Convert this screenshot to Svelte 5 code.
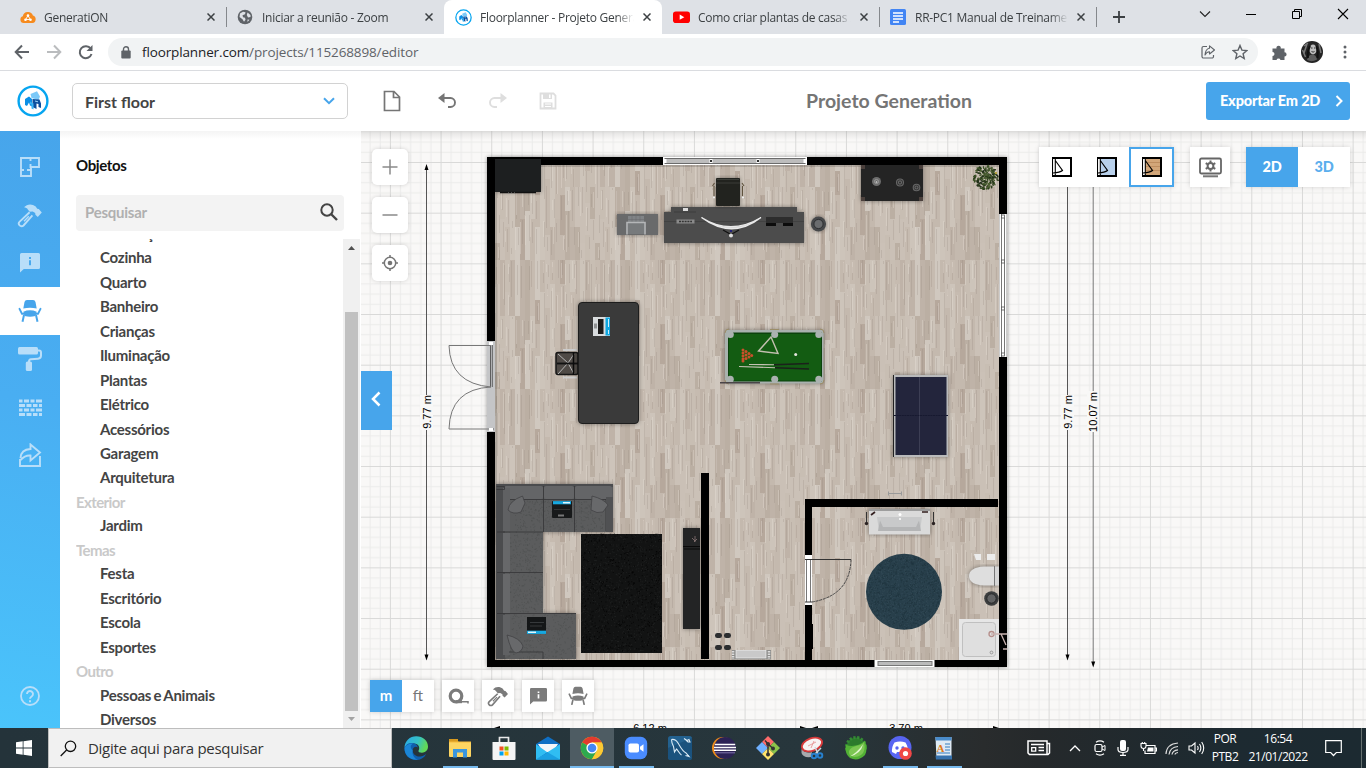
<script>
  function rng(seed) {
    let s = seed;
    return () => {
      s = (s * 16807) % 2147483647;
      return s / 2147483647;
    };
  }

  // Laminate floor tile: narrow vertical planks in staggered rows.
  const tones = ['#cdc4ba', '#c8beb3', '#c4b9ae', '#bfb3a8', '#cbc1b7', '#bbafa3', '#d0c8bf', '#c6bbb0', '#b6a89c', '#cac0b6'];
  const planks = tones.map((c) => ({ c, d: '' }));
  const grain = [];
  const shine = [];
  {
    const r = rng(4271);
    for (let k = 0; k < 20; k++) {
      const x = k * 5;
      const w = 5;
      let y = 0;
      while (y < 129) {
        let h = [24, 32, 32, 40, 56][Math.floor(r() * 5)];
        if (y + h > 112) h = 129 - y;
        const i = Math.floor(r() * tones.length);
        planks[i].d += `M${x} ${y}h${w}v${h}h-${w}z`;
        grain.push(`M${x + 1 + Math.floor(r() * 4)}.5 ${y + Math.floor(r() * 8)}v${Math.floor(h * (0.4 + r() * 0.4))}`);
        if (r() > 0.4) shine.push(`M${x + Math.floor(r() * 4)}.5 ${y + Math.floor(r() * 6)}v${Math.floor(h * (0.3 + r() * 0.5))}`);
        y += h;
      }
    }
  }

  function specks(n, seed, x, y, w, h, round) {
    const r = rng(seed);
    let d = '';
    for (let i = 0; i < n; i++) {
      const px = r() * w;
      const py = r() * h;
      if (round && Math.hypot(px - w / 2, py - h / 2) > w / 2 - 1) continue;
      d += `M${(x + px).toFixed(1)} ${(y + py).toFixed(1)}h.9`;
    }
    return d;
  }
  const rugSpecks = specks(900, 77, 581, 534, 80, 118, false);
  const rugDark = specks(700, 99, 581, 534, 80, 118, false);
  const roundLight = specks(1300, 31, 866, 554, 76, 76, true);
  const roundDark = specks(1300, 53, 866, 554, 76, 76, true);
  const sofaSpecks = specks(500, 13, 497, 532, 45, 80, false) + specks(400, 17, 497, 614, 78, 45, false) + specks(400, 19, 515, 500, 88, 31, false);
  const leaves = (() => {
    const r = rng(881);
    const out = [];
    for (let i = 0; i < 150; i++) {
      const a = r() * 6.28;
      const q = Math.pow(r(), 0.6) * 12.5;
      out.push({ x: 985.5 + Math.cos(a) * q, y: 177.5 + Math.sin(a) * q * 0.95, a: a * 97, c: ['#2c3d1c', '#3c5227', '#22301a', '#4b5f31'][i % 4] });
    }
    return out;
  })();

  const tabs = [
    { icon: 'cloud', title: 'GeneratiON', w: 226, sep: true },
    { icon: 'globe', title: 'Iniciar a reunião - Zoom', w: 218 },
    { icon: 'fp', title: 'Floorplanner - Projeto Generation', w: 218, active: true },
    { icon: 'yt', title: 'Como criar plantas de casas 2D', w: 217, sep: true },
    { icon: 'doc', title: 'RR-PC1 Manual de Treinamento', w: 217, sep: true }
  ];
  const list = [
    { t: 'Decoração' }, { t: 'Cozinha' }, { t: 'Quarto' }, { t: 'Banheiro' }, { t: 'Crianças' }, { t: 'Iluminação' },
    { t: 'Plantas' }, { t: 'Elétrico' }, { t: 'Acessórios' }, { t: 'Garagem' }, { t: 'Arquitetura' },
    { t: 'Exterior', h: true }, { t: 'Jardim' }, { t: 'Temas', h: true }, { t: 'Festa' }, { t: 'Escritório' },
    { t: 'Escola' }, { t: 'Esportes' }, { t: 'Outro', h: true }, { t: 'Pessoas e Animais' }, { t: 'Diversos' }
  ];
  const apps = ['edge', 'files', 'store', 'mail', 'chrome', 'zoom', 'mysql', 'eclipse', 'git', 'snip', 'spring', 'discord', 'wordpad'];
  const running = ['files', 'zoom', 'discord', 'wordpad'];
</script>

{#snippet logo(size)}
  <svg width={size} height={size} viewBox="0 0 32 32">
    <circle cx="16" cy="16" r="14.4" fill="#fff" stroke="#06a5f0" stroke-width="2.4" />
    <path d="M13.500 9l6.500-2.800 3 5.300-1.500 3.500-7-2z" fill="#7cc9f8" />
    <path d="M8 14l4-2.500 3 2.500v7.500l-2-1-1-3-2 3.500-2-1z" fill="#0a8fe6" />
    <path d="M15.500 14l7 .5 1.500 4v4.500l-2.500-1v-3l-2-.5V24l-4-2z" fill="#0b4f9e" />
    <path d="M13 16.500l3.500 2V24.500l-2-1v-4L13 19z" fill="#37b4f5" />
    <path d="M18 16l3 .8" stroke="#9bd8fb" stroke-width="1" />
  </svg>
{/snippet}

{#snippet hammer()}
  <svg width="26" height="26" viewBox="0 0 26 26">
    <path d="M7 5.300C10 1.800 15 1.400 18.700 4.500l1.500 2.200 1.600.4 3 3.400-4 4.400-2.400-2.200-.2-1.800-2.500-1.500-3 .4L11 7.700C10 6 8.600 5.600 7 5.300z" fill="currentColor" />
    <path d="M12.600 10.300L2.700 19.600a2.700 2.700 0 0 0 3.800 3.900l8.900-10.100" fill="none" stroke="currentColor" stroke-width="1.900" />
    <path d="M7 19.200l4.800-5" stroke="currentColor" stroke-width="1.300" />
  </svg>
{/snippet}

{#snippet note()}
  <svg width="20" height="20" viewBox="0 0 20 20">
    <path fill-rule="evenodd" fill="currentColor" d="M1.500 0h17A1.500 1.500 0 0 1 20 1.500v13a1.500 1.500 0 0 1-1.500 1.500H3.800L0 19.500v-18A1.500 1.500 0 0 1 1.500 0zM9 4v2h2V4zM9 7.300v5h2v-5z" />
  </svg>
{/snippet}

{#snippet chair()}
  <svg width="24" height="24" viewBox="0 0 24 24">
    <path d="M9 1h6q2 0 2.500 2l1.200 6.500q-6.700-1.700-13.400 0L6.500 3Q7 1 9 1z" fill="currentColor" />
    <path d="M1.500 9.800l2.500 5h3M22.500 9.800l-2.500 5h-3" fill="none" stroke="currentColor" stroke-width="1.900" stroke-linecap="round" />
    <path d="M5.300 12.700q6.700-2.800 13.400 0l-1.300 4.300q-5.400 1.400-10.800 0z" fill="currentColor" />
    <path d="M6 16l-1.500 6.700M18 16l1.500 6.700" stroke="currentColor" stroke-width="2" />
  </svg>
{/snippet}

{#snippet xmark(s)}
  <svg width={s} height={s} viewBox="0 0 8 8"><path d="M.5.5l7 7M7.500.5l-7 7" stroke="#3c4043" stroke-width="1.500" /></svg>
{/snippet}

{#snippet plan(fill)}
  <svg width="20" height="20" viewBox="0 0 20 20">
    <rect x="1" y="1" width="18" height="18" {fill} stroke="#000" stroke-width="2" />
    {#if fill === '#d2a679'}<path d="M3 5.500h15M3 9.500h15M3 13.500h15" stroke="#bd8d60" />{/if}
    <path d="M1 2h2v16H1z" fill="#fff" />
    <path d="M.5 1v18M3.300 2v16M3.300 3.500L10.500 13.500Q8 15.500 1 16" fill="none" stroke="#000" stroke-width="1.100" />
  </svg>
{/snippet}

{#snippet tabIcon(name)}
  {#if name === 'cloud'}
    <svg width="16" height="16" viewBox="0 0 16 16"><path d="M3.500 14A3.500 3.500 0 0 1 2.800 7.200 5.200 5.200 0 0 1 12.900 6.600 3.800 3.800 0 0 1 12.500 14z" fill="#f68b1f" /><path d="M8 6.500l-2.300 4h4.600z" fill="none" stroke="#fff" stroke-width=".9" /><g fill="#fff"><circle cx="8" cy="6.500" r="1.300" /><circle cx="5.500" cy="10.700" r="1.300" /><circle cx="10.500" cy="10.700" r="1.300" /></g></svg>
  {:else if name === 'globe'}
    <svg width="16" height="16" viewBox="0 0 16 16"><circle cx="8" cy="8" r="7.300" fill="#5f6368" /><path d="M3 4.500l3-1.800 2.500.5-.5 2-2.500 1 .5 2 2 .5.500 2-1.500 2-1.500-2.500L2.500 8zM10.500 3.500l3 2.500v2l-2.500.5-1.200-2.500zM10.500 10.500l2 .2-2 2.300z" fill="#dee1e6" /></svg>
  {:else if name === 'fp'}
    {@render logo(17)}
  {:else if name === 'yt'}
    <svg width="17" height="16" viewBox="0 0 17 16"><rect y="2.500" width="17" height="11.500" rx="2.800" fill="#f00" /><path d="M6.700 5.600v5.200L11.300 8.200z" fill="#fff" /></svg>
  {:else}
    <svg width="16" height="16" viewBox="0 0 16 16"><rect width="16" height="16" rx="1.500" fill="#4285f4" /><path d="M3 4h10M3 7h10M3 10h10M3 13h6" stroke="#fff" stroke-width="1.500" /></svg>
  {/if}
{/snippet}

{#snippet appIcon(n)}
  <svg width="24" height="24" viewBox="0 0 24 24">
    {#if n === 'edge'}
      <defs><linearGradient id="eg" x1="0" y1="0" x2="1" y2=".3"><stop offset="0" stop-color="#2aa9e8" /><stop offset=".6" stop-color="#35c1c6" /><stop offset="1" stop-color="#62d957" /></linearGradient></defs>
      <path d="M.5 12C.500 5 6 .3 12.200.3 19 .3 24 5 24 10.600c0 4-3 6.200-6 6.200-2.500 0-4-1-3.500-2 1.800-3 .3-7.300-4.500-7.300C5 7.500 1.500 10 .500 12z" fill="url(#eg)" />
      <path d="M.5 12c1-3.500 4.500-5.500 8-5 3 .3 5.200 2.200 5.200 4.500-2-1.500-5-.3-5 3 0 4 4 6.500 8 6 3-.4 4.500-2 5.500-2.500C20 22 16.500 24 12 24 5.500 24 0 19 .5 12z" fill="#0f5fae" />
      <path d="M8.700 14.500c-1 3.500 1.300 8 5.300 9.300C6 24.500.5 19 .5 12 2 8.500 6 7 9 7.500c-2.800 1.500-3 4.500-.3 7z" fill="#1b86d6" />
    {:else if n === 'files'}
      <path d="M1 3.500h8l1.500 2H23V20H1z" fill="#f6b93b" /><path d="M1 6.500h22V20a1 1 0 0 1-1 1H2a1 1 0 0 1-1-1z" fill="#fdd562" /><path d="M1 3h9v2.500H1z" fill="#d99a1f" /><path d="M5 21.500V13h14v8.500h-4v-5H9v5z" fill="#3b96dc" />
    {:else if n === 'store'}
      <path d="M7.500 6V1.500h9V6" fill="none" stroke="#e9e9e9" stroke-width="1.700" /><path d="M.5 6h23v17a1 1 0 0 1-1 1h-21a1 1 0 0 1-1-1z" fill="#f4f4f4" /><path d="M7.500 10.500h4v4h-4z" fill="#f25022" /><path d="M12.500 10.500h4v4h-4z" fill="#7fba00" /><path d="M7.500 15.500h4v4h-4z" fill="#00a4ef" /><path d="M12.500 15.500h4v4h-4z" fill="#ffb900" />
    {:else if n === 'mail'}
      <path d="M0 8L12 .500 24 8v15.500H0z" fill="#0f6fc4" /><path d="M2 8h20l-5 8H7z" fill="#f3f6f9" /><path d="M0 8.200l12 8.500-12 6.800zM24 8.200L0 23.500h24z" fill="#30bdf2" /><path d="M0 23.500l12-7 12 7z" fill="#1ba0e2" />
    {:else if n === 'chrome'}
      <circle cx="12" cy="12" r="11.200" fill="#fbc116" /><path d="M12 12L2.300 6.400A11.200 11.200 0 0 1 21.700 6.400H12z" fill="#e33b2e" /><path d="M12 12l-9.700-5.600A11.200 11.200 0 0 0 12 23.200l5-8.500z" fill="#2da94f" /><path d="M12 6.400h9.700A11.200 11.200 0 0 1 12 23.200l4.800-8.400z" fill="#fcc934" /><circle cx="12" cy="12" r="5.600" fill="#fff" /><circle cx="12" cy="12" r="4.300" fill="#4587f3" />
    {:else if n === 'zoom'}
      <rect x=".8" y=".8" width="22.400" height="22.400" rx="6.500" fill="#4a8cff" /><rect x="4.500" y="7.500" width="10.500" height="9" rx="1.800" fill="#fff" /><path d="M16 10.800l3.500-2.600v7.600L16 13.200z" fill="#fff" />
    {:else if n === 'mysql'}
      <rect width="24" height="24" rx="2.500" fill="#23618f" /><path d="M0 12L24 2v19a3 3 0 0 1-3 3H3a3 3 0 0 1-3-3z" fill="#174c76" opacity=".7" /><path d="M3.500 3.500c3-.5 5 1 6.500 3.500 2.500 4 4 8 8 10l3 3.500-3.500-1M3.500 3.500c0 3 1 5 2 7l1 5.500 2-3c2 2 3 5 5 6M16 2.500l3 2 2-1 1 2.500-2 0-2-2" fill="none" stroke="#dcecf7" stroke-width="1.100" />
    {:else if n === 'eclipse'}
      <ellipse cx="11" cy="12" rx="11" ry="11" fill="#f08c1a" /><circle cx="13" cy="12" r="11" fill="#2c2255" /><path d="M2.800 8.500h20.400M2 11.500h22M2 14.300h22" stroke="#fff" stroke-width="1.400" /><path d="M3 16.800h20" stroke="#8075ad" stroke-width="1" />
    {:else if n === 'git'}
      <path d="M12 0l6 6-6 6-6-6z" fill="#ff6b6b" /><path d="M6 6l6 6-6 6-6-6z" fill="#6fb0ff" /><path d="M18 6l6 6-6 6-6-6z" fill="#8bc34a" /><path d="M12 12l6 6-6 6-6-6z" fill="#ffe36b" /><path d="M9 4.500l3 3.500v11M12 8l5 4.500" fill="none" stroke="#333" stroke-width="1.500" /><circle cx="12" cy="8" r="2" fill="#333" /><circle cx="17" cy="12.500" r="2" fill="#333" /><circle cx="12" cy="18.500" r="2" fill="#333" />
    {:else if n === 'snip'}
      <path d="M1.500 13q4 5 10.500 3l-1 5Q3 22 1.500 17z" fill="#a6aaad" /><ellipse cx="12" cy="8.500" rx="10.500" ry="6.300" transform="rotate(-20 12 8.500)" fill="#f7f4f4" stroke="#d83a3a" stroke-width="1.800" /><path d="M8 10l8-4M11 12l3-7" stroke="#e9a0a0" stroke-width="1" /><path d="M15 11l3 7M21 12l-6 6" stroke="#cfd8df" stroke-width="1.500" /><circle cx="14" cy="20" r="2.300" fill="none" stroke="#2781cf" stroke-width="1.900" /><circle cx="20" cy="19.500" r="2.300" fill="none" stroke="#2781cf" stroke-width="1.900" />
    {:else if n === 'spring'}
      <circle cx="12" cy="11" r="9.500" fill="#2c7a2c" stroke="#348b34" stroke-width="3" stroke-dasharray="2.200 1.600" /><path d="M2 9q10 3 19-4 3 8 0 14-7 7-15 3Q0 17 2 9z" fill="#52b135" /><path d="M20 6q2 10-3 13-6 3.500-11 .5-3-5 2-8 4-2 8-2.500 3-.8 4-3z" fill="#7cc653" /><path d="M19 8.500q-2 9-13 12 7-4 13-12z" fill="#e2f6cf" />
    {:else if n === 'discord'}
      <circle cx="12" cy="11.500" r="11.500" fill="#5865f2" /><path d="M6.500 6.500q5.500-2 11 0 3 5 2.500 9.500l-4 2-1-2h-6l-1 2-4-2Q3.500 11 6.500 6.500z" fill="#fff" /><circle cx="9" cy="12" r="1.700" fill="#5865f2" /><circle cx="15" cy="12" r="1.700" fill="#5865f2" /><circle cx="17.500" cy="17.500" r="6.300" fill="#f04747" /><circle cx="17.500" cy="17.500" r="2.600" fill="#fff" />
    {:else}
      <path d="M3.500 1h16v22H4.500z" fill="#dfeaf4" /><path d="M3.500 1h16v3.500h-16z" fill="#4a8ccb" /><path d="M13 8h5M13 11h5M13 14h5M5 17h13" stroke="#6da1cf" stroke-width="1.300" /><path d="M3.500 19.500h16.500v4h-16z" fill="#3772ad" /><text x="4.500" y="15.500" font-size="11" font-weight="bold" font-family="Liberation Serif, serif" fill="#e07a1b">A</text>
    {/if}
  </svg>
{/snippet}

<div class="screen">
  <div class="tabs">
    {#each tabs as t}
      <div class="tab" class:active={t.active} class:sep={t.sep} style="width:{t.w}px">
        <span class="fav">{@render tabIcon(t.icon)}</span>
        <span class="title">{t.title}</span>
        <span class="x">{@render xmark(8)}</span>
      </div>
    {/each}
    <svg class="newtab" width="12" height="12" viewBox="0 0 12 12"><path d="M6 0v12M0 6h12" stroke="#3c4043" stroke-width="1.800" /></svg>
    <div class="wins">
      <svg width="12" height="12" viewBox="0 0 12 12"><path d="M1 3.500l5 5 5-5" fill="none" stroke="#222" stroke-width="1.100" /></svg>
      <svg width="12" height="12" viewBox="0 0 12 12"><path d="M1 6.500h10" stroke="#000" stroke-width="1" /></svg>
      <svg width="12" height="12" viewBox="0 0 12 12"><path d="M1.500 3.500h7v7h-7zM3.500 3.500v-2h7v7h-2" fill="none" stroke="#000" stroke-width="1" /></svg>
      <svg width="12" height="12" viewBox="0 0 12 12"><path d="M1 1l10 10M11 1L1 11" stroke="#000" stroke-width="1.100" /></svg>
    </div>
  </div>

  <div class="toolbar">
    <svg class="nav" width="16" height="16" viewBox="0 0 16 16"><path d="M15 8H2M8 1.500L1.700 8 8 14.500" fill="none" stroke="#5f6368" stroke-width="2" /></svg>
    <svg class="nav" width="16" height="16" viewBox="0 0 16 16"><path d="M1 8h13M8 1.500L14.300 8 8 14.500" fill="none" stroke="#babcbe" stroke-width="2" /></svg>
    <svg class="nav" width="16" height="16" viewBox="0 0 16 16"><path d="M13.500 10a6 6 0 1 1-.8-5.300" fill="none" stroke="#5f6368" stroke-width="2" /><path d="M14.500 1v6H8.500z" fill="#5f6368" /></svg>
    <div class="omni">
      <svg width="10" height="13" viewBox="0 0 10 13"><rect x=".3" y="4.500" width="9.400" height="8" rx="1" fill="#5f6368" /><path d="M2.500 5V3.200a2.500 2.500 0 0 1 5 0V5" fill="none" stroke="#5f6368" stroke-width="1.400" /></svg>
      <span class="url"><b>floorplanner.com</b>/projects/115268898/editor</span>
      <svg class="share" width="16" height="16" viewBox="0 0 16 16"><path d="M7 2.500H3.500a1.500 1.500 0 0 0-1.500 1.500v8.500A1.500 1.500 0 0 0 3.500 14H12a1.500 1.500 0 0 0 1.500-1.500V11" fill="none" stroke="#5f6368" stroke-width="1.200" /><path d="M9.500 1.800L14.500 6l-5 4V7.800Q6.500 7.800 5 11q.5-6 4.500-6.700z" fill="none" stroke="#5f6368" stroke-width="1.100" stroke-linejoin="round" /></svg>
      <svg width="16" height="16" viewBox="0 0 16 16"><path d="M8 1.500l1.900 4.600 4.900.4-3.700 3.200 1.100 4.800L8 12l-4.200 2.500 1.100-4.800L1.200 6.500l4.900-.4z" fill="none" stroke="#5f6368" stroke-width="1.400" /></svg>
    </div>
    <svg class="puz" width="17" height="17" viewBox="0 0 17 17"><path d="M1.500 4.500h4a2.200 2.200 0 1 1 4.200 0h3.800V8.300a2.100 2.100 0 1 1 0 4.200V16h-4a2.100 2.100 0 0 0-4 0h-4v-4a2 2 0 0 0 0-4z" fill="#5f6368" /></svg>
    <svg class="ava" width="22" height="22" viewBox="0 0 22 22"><circle cx="11" cy="11" r="11" fill="#242424" /><path d="M3 5l4-3M1.500 9l3 7M18 3l2 9M3 12l3-9" stroke="#777" stroke-width="1.500" /><ellipse cx="12" cy="8.500" rx="3.600" ry="5" fill="#bdbdbd" /><path d="M10 7h1.500M13 7h1.500M10.500 10.500q1.700 1.300 3 0" stroke="#333" fill="none" /><path d="M6 19q1-5 5-5.500 4 0 5 5-5 3-10 .5z" fill="#5d5d5d" /><path d="M9 5q-3 6-2 12M15.500 5q2 6 1 12" fill="none" stroke="#111" stroke-width="2" /></svg>
    <svg width="4" height="16" viewBox="0 0 4 16" fill="#5f6368"><circle cx="2" cy="3" r="1.500" /><circle cx="2" cy="8" r="1.500" /><circle cx="2" cy="13" r="1.500" /></svg>
  </div>

  <header>
    <span class="brand">{@render logo(32)}</span>
    <div class="select">First floor
      <svg width="12" height="8" viewBox="0 0 12 8"><path d="M1 1.200l5 5 5-5" fill="none" stroke="#47a5eb" stroke-width="2" /></svg>
    </div>
    <div class="tools">
      <svg width="20" height="22" viewBox="0 0 20 22"><path d="M2.500 1.500h9.500l5.500 5.500v13.500h-15zM11.500 1.500v6h6" fill="none" stroke="#757575" stroke-width="1.700" /></svg>
      <svg class="undo" width="20" height="22" viewBox="0 0 20 22"><path d="M5 8h8.500a4.500 4.500 0 0 1 0 9H11" fill="none" stroke="#757575" stroke-width="1.900" /><path d="M7.500 3v10L1 8z" fill="#757575" /></svg>
      <svg class="redo" width="20" height="22" viewBox="0 0 20 22"><path d="M15 8H6.500a4.500 4.500 0 0 0 0 9H9" fill="none" stroke="#dedede" stroke-width="1.900" /><path d="M12.500 3v10L19 8z" fill="#dedede" /></svg>
      <svg width="20" height="22" viewBox="0 0 20 22"><path d="M2.500 3.500h13l2 2v13h-15z" fill="none" stroke="#dedede" stroke-width="1.800" /><path d="M5 3h9v6H5zM5.500 12.500h9V18h-9z" fill="#dedede" /><path d="M11 4.500h1.500V8H11z" fill="#fff" /><path d="M7 14h6M7 16.500h6" stroke="#fff" /></svg>
    </div>
    <h1>Projeto Generation</h1>
    <button class="export">Exportar Em 2D
      <svg width="8" height="12" viewBox="0 0 8 12"><path d="M1.500 1l5 5-5 5" fill="none" stroke="#fff" stroke-width="2" /></svg>
    </button>
  </header>

  <main>
    <nav>
      <div><svg width="20" height="20" viewBox="0 0 20 20"><path d="M1 1h18v9h-8v9H1zM10.500 1v3M10.500 7v4M1 13h3M7 13h4" fill="none" stroke="currentColor" stroke-width="1.900" /></svg></div>
      <div>{@render hammer()}</div>
      <div>{@render note()}</div>
      <div class="on">{@render chair()}</div>
      <div><svg width="24" height="24" viewBox="0 0 24 24"><rect y="0" width="20" height="7.500" rx="1.500" fill="currentColor" /><path d="M20 3.500h1q2 0 2 2v3q0 3-3 3.200l-7 .6q-2 .2-2 2.200v1" fill="none" stroke="currentColor" stroke-width="2" /><rect x="7.800" y="14.500" width="6.200" height="9.500" rx="1.500" fill="currentColor" /></svg></div>
      <div><svg width="23" height="17" viewBox="0 0 23 17"><path d="M0 2h3.500M5 2h5M11.500 2h4M17 2h6M0 6.500h6M7.500 6.500h5M14 6.500h4.500M20 6.500h3M0 11h3.500M5 11h5M11.500 11h4M17 11h6M0 15.500h6M7.500 15.500h5M14 15.500h4.500M20 15.500h3" stroke="currentColor" stroke-width="3" /></svg></div>
      <div><svg width="24" height="24" viewBox="0 0 24 24"><path d="M2.500 15Q3 6.500 12.500 6V1.500l9.500 8-9.500 8v-5Q7 12 2.500 17M2 16v7h20V13" fill="none" stroke="currentColor" stroke-width="1.900" /></svg></div>
      <div class="help"><svg width="20" height="20" viewBox="0 0 20 20"><circle cx="10" cy="10" r="9" fill="none" stroke="currentColor" stroke-width="1.800" /><path d="M7 8a3 3 0 1 1 4.600 2.500Q10 11.500 10 12.800" fill="none" stroke="currentColor" stroke-width="1.900" /><path d="M9 14.300h2v2H9z" fill="currentColor" /></svg></div>
    </nav>

    <aside>
      <h2>Objetos</h2>
      <div class="search">Pesquisar
        <svg width="18" height="18" viewBox="0 0 18 18"><circle cx="7" cy="7" r="5.700" fill="none" stroke="#444" stroke-width="2" /><path d="M11 11l6 6" stroke="#444" stroke-width="2.400" /></svg>
      </div>
      <div class="scroller">
        <div class="list">
          {#each list as i}
            <div class={i.h ? 'group' : 'item'}>{i.t}</div>
          {/each}
        </div>
        <div class="bar">
          <svg width="7" height="4" viewBox="0 0 7 4"><path d="M0 4L3.500 0 7 4z" fill="#505050" /></svg>
          <span class="thumb"></span>
          <svg width="7" height="4" viewBox="0 0 7 4"><path d="M0 0l3.500 4L7 0z" fill="#a3a3a3" /></svg>
        </div>
      </div>
    </aside>

    <section>
      <svg class="canvas" width="1005" height="597" viewBox="361 131 1005 597">
        <defs>
          <pattern id="grid" patternUnits="userSpaceOnUse" x="389.900" y="162" width="50.670" height="50.670">
            <path d="M10.600 0v50.700M20.700 0v50.700M30.900 0v50.700M41 0v50.700M0 10.600h50.700M0 20.700h50.700M0 30.900h50.700M0 41h50.700" stroke="#ebebea" stroke-width="1" />
            <path d="M.5 0v50.700M0 .5h50.700" stroke="#d9d9d8" stroke-width="1" />
          </pattern>
          <pattern id="floor" patternUnits="userSpaceOnUse" x="495" y="131" width="100" height="129">
            {#each planks as p}<path d={p.d} fill={p.c} />{/each}
            <path d={grain.join('')} stroke="#8f8074" stroke-opacity=".22" stroke-width="1" />
            <path d={shine.join('')} stroke="#e6ded6" stroke-opacity=".35" stroke-width="1" />
          </pattern>
          <linearGradient id="topshade" x1="0" y1="0" x2="0" y2="1"><stop offset="0" stop-color="#000" stop-opacity=".09" /><stop offset="1" stop-color="#000" stop-opacity="0" /></linearGradient>
          <filter id="sh" x="-10%" y="-10%" width="120%" height="120%" color-interpolation-filters="sRGB"><feDropShadow dx="0" dy="0" stdDeviation="2" flood-opacity=".4" /></filter>
        </defs>
        <rect x="361" y="131" width="1005" height="597" fill="#f9f8f7" />
        <rect x="361" y="131" width="1005" height="597" fill="url(#grid)" />

        <rect x="487" y="157" width="520" height="510" fill="#000" filter="url(#sh)" />
        <rect x="495" y="165" width="504" height="495" fill="url(#floor)" />
        <path d="M496 660V166H999" fill="none" stroke="#000" stroke-opacity=".15" stroke-width="2" />

        <g fill="#000"><rect x="701" y="473" width="8" height="186" /><rect x="805" y="499" width="193" height="8" /><rect x="805" y="499" width="7" height="162" /><rect x="811" y="624" width="2" height="25" /></g>

        <!-- windows -->
        <rect x="663" y="157" width="144" height="8" fill="#fff" /><rect x="665" y="158.500" width="140" height="5" fill="#bdbdbd" stroke="#6b6b6b" /><path d="M711 159v4M758 159v4M665 159v4M805 159v4" stroke="#fff" stroke-width="3" /><path d="M710 160h2v2h-2zM757 160h2v2h-2z" fill="#333" />
        <rect x="999" y="214" width="8" height="143" fill="#fff" /><path d="M1001.500 214v143M1004.500 218v135" stroke="#777" /><path d="M999.500 214v143M1006.500 214v143" stroke="#ccc" /><g fill="#fff" stroke="#555" stroke-width=".8"><rect x="1001.500" y="215" width="3" height="3" /><rect x="1001.500" y="260" width="3" height="3" /><rect x="1001.500" y="307" width="3" height="3" /><rect x="1001.500" y="353" width="3" height="3" /></g>
        <rect x="874.500" y="660" width="60" height="7" fill="#fff" /><rect x="878" y="661.500" width="54" height="4" fill="#bbb" stroke="#777" />

        <!-- doors -->
        <rect x="487" y="341" width="8" height="91" fill="#c4c5c7" /><path d="M490.500 345v42M492.300 345v42M489 429h5" fill="none" stroke="#444" stroke-width=".8" /><path d="M491 345.500h-42q1 38 42 41.500q-41 2-42 42h42" fill="none" stroke="#777" stroke-width="1" /><path d="M489 342h4v3h-4zM489 428h4v3h-4z" fill="#fff" />
        <rect x="805" y="555" width="7" height="50" fill="#fff" /><path d="M806.500 559v43M810.500 559v43" stroke="#777" /><path d="M805 559.500h46M805 602h7" stroke="#333" /><path d="M851 559.500q-1 36-39 42.500" fill="none" stroke="#444" stroke-dasharray="3 .8" />

        <!-- cabinet -->
        <rect x="495" y="159" width="46" height="33" fill="#1d1f20" filter="url(#sh)" /><path d="M500 192.500h36" stroke="#111" stroke-width="1.500" /><path d="M508 193h7" stroke="#888" stroke-dasharray="1 2" />

        <!-- printer -->
        <g filter="url(#sh)"><rect x="617" y="214" width="41" height="21" fill="#696a6b" /></g>
        <rect x="628" y="216" width="16" height="7" fill="#808386" /><path d="M628 219.500h16M632 216v6M636 216v6M640 216v6" stroke="#6b6d70" stroke-width=".6" /><rect x="628" y="223" width="16" height="11" fill="#777a7c" /><path d="M627 234.500V222.500h18v12" fill="none" stroke="#b4b6b8" stroke-width="1.600" />

        <!-- desk -->
        <path d="M671 207h126v5h7v31H664v-31h7z" fill="#4c4c4c" filter="url(#sh)" /><path d="M664 221.500h140" stroke="#414141" /><path d="M674 212h22" stroke="#3c3c3c" />
        <rect x="716" y="178" width="24" height="28" rx="1" fill="#22231f" filter="url(#sh)" /><path d="M716 183h24M717 179.500h22" stroke="#3b3d38" /><path d="M714.500 183l-2 3M714 186v10M742 183l2 3M742.500 186v10" stroke="#5f523e" stroke-width="1.100" fill="none" /><path d="M713 197.500h2M742 197.500h2" stroke="#eee" stroke-width="1.500" />
        <path d="M701.500 217.500q29 18.500 59.500 0q-29 22.500-59.500 0z" fill="#cfcfcf" stroke="#e9e9e9" stroke-width="1.300" /><path d="M723 230l8 4.500 8-4.500" fill="none" stroke="#111" stroke-width="1.200" /><circle cx="731" cy="235.500" r="2" fill="#ddd" /><path d="M730 230h2v2h-2z" fill="#227" />
        <rect x="683" y="208" width="5" height="3" fill="#ddd" /><rect x="676.500" y="219.500" width="18" height="4" fill="#8a8a8a" /><path d="M679 221.500h13" stroke="#333" stroke-width="1.500" stroke-dasharray="2 .8" />
        <rect x="766" y="217" width="27" height="6" fill="#2d2d2d" /><path d="M766 223h10v3h-10zM783 223h10v3h-10z" fill="#0c0c0c" />
        <circle cx="818.500" cy="224" r="7.600" fill="#46484a" filter="url(#sh)" /><circle cx="818.500" cy="224" r="4.600" fill="#6a6c6e" stroke="#2d2f31" />

        <!-- console table -->
        <rect x="861" y="165" width="62" height="36" fill="#242424" filter="url(#sh)" /><path d="M861 165h4v4h-4zM919 165h4v4h-4zM861 197h4v4h-4zM919 197h4v4h-4z" fill="#4b403c" />
        <circle cx="876.500" cy="181.500" r="4.500" fill="#6d6d6d" /><circle cx="876.500" cy="181.500" r="2" fill="none" stroke="#999" /><circle cx="876.500" cy="182" r=".8" fill="#ddd" /><g fill="#333" stroke="#666" stroke-width="1.100"><circle cx="900" cy="182.500" r="3.500" /><circle cx="900" cy="182.500" r="1.600" /><circle cx="916.500" cy="187.500" r="3.300" /><circle cx="916.500" cy="187.500" r="1.500" /></g>
        {#each leaves as l}<ellipse cx={l.x} cy={l.y} rx="1.500" ry=".8" fill={l.c} transform="rotate({l.a} {l.x} {l.y})" />{/each}
        <circle cx="996" cy="173" r="1" fill="#b49a1a" />

        <!-- executive desk -->
        <rect x="556" y="352.500" width="22" height="22" rx="2" fill="#4f4a46" stroke="#161616" stroke-width="1.500" /><path d="M558 354l10 9-10 11M568 363l6-9M568 363l6 11" stroke="#b5b5b5" stroke-width="1" fill="none" /><path d="M557 363.500h21" stroke="#111" stroke-width="1.800" /><path d="M563 350h14M563 377.500h14" stroke="#ccc" stroke-width="2" /><path d="M573.500 352v23" stroke="#0b0b0b" stroke-width="1.500" />
        <rect x="578.500" y="302.500" width="60" height="121" rx="3.500" fill="#3a3a3a" stroke="#1d1d1d" filter="url(#sh)" />
        <rect x="593" y="317" width="17" height="19" fill="#d9dcde" /><rect x="598" y="319" width="5.500" height="15" fill="#1b1b1b" /><rect x="594" y="323.500" width="3" height="5" fill="#8f9193" /><rect x="605.500" y="317.500" width="4.500" height="18" fill="#10a6e0" /><path d="M608.500 319v8M608.500 330v4" stroke="#cdeefa" stroke-width="1" />

        <!-- pool table -->
        <rect x="725" y="330" width="98.500" height="53.500" rx="2" fill="#a9b1ae" filter="url(#sh)" /><rect x="728" y="332.500" width="94" height="49" fill="#0b420c" /><rect x="729" y="334" width="92" height="46.500" fill="#135c12" />
        <g fill="#abb2b0"><circle cx="730.300" cy="334.500" r="3.500" /><circle cx="774.700" cy="334.500" r="3.500" /><circle cx="818.800" cy="334.500" r="3.500" /><circle cx="730.300" cy="379.300" r="3.500" /><circle cx="774.700" cy="379.300" r="3.500" /><circle cx="818.800" cy="379.300" r="3.500" /></g>
        <path d="M725 333q0-4 4-4M770 329.500h9M820 329q4 0 4 4M725 380q0 4 4 4M770 384h9M820 384q4 0 4-4" fill="none" stroke="#9b8d68" stroke-width="1" />
        <path d="M771 337l-12.500 14L778 353.500z" fill="none" stroke="#c3bfb0" stroke-width="1.400" /><g fill="#c9502a">{#each [[743, 350], [743, 353], [743, 356], [743, 359], [743, 361], [746, 351.500], [746, 355], [746, 358.500], [749, 353.500], [749, 357], [751.700, 355.500]] as b}<circle cx={b[0]} cy={b[1]} r="1.500" />{/each}</g>
        <circle cx="795.700" cy="354.500" r="1.500" fill="#e4e4dd" /><path d="M749 364.500l25 .2M739 366.500l36 1.200" stroke="#c5c2b4" stroke-width="1.100" /><path d="M774 364.700l35-1.200M775 367.700l34 1.300" stroke="#1b211b" stroke-width="1.500" /><path d="M720 382.700h40" stroke="#4a4548" stroke-width="1.500" />

        <!-- ping pong -->
        <rect x="893" y="375" width="55" height="82" fill="#b9babb" filter="url(#sh)" /><path d="M893.500 375v82" stroke="#222" /><rect x="895.500" y="377" width="51" height="78" fill="#23253c" /><path d="M919.500 377v78" stroke="#43455a" stroke-width=".8" /><path d="M894 415.500h54" stroke="#171930" stroke-width="1" stroke-dasharray="2 .6" />

        <!-- corner sofa -->
        <path d="M496 484h117v48h-70v81h33v46h-80z" fill="#5b5c5d" filter="url(#sh)" /><path d={sofaSpecks} stroke="#4f5051" stroke-width=".8" />
        <path d="M496 484h117v3H505v172h-9z" fill="#4b4c4e" /><rect x="504" y="486" width="39" height="13" rx="2" fill="#646567" /><rect x="544" y="486" width="30" height="13" rx="2" fill="#646567" /><rect x="575" y="486" width="37" height="13" rx="2" fill="#646567" /><rect x="503" y="488" width="7" height="43" fill="#606163" /><rect x="503" y="533" width="7" height="39" fill="#67686a" /><rect x="503" y="574" width="7" height="39" fill="#67686a" /><rect x="503" y="615" width="7" height="40" fill="#606163" />
        <path d="M496.500 486.500h8v3h-8M497 532h46M497 572.500h46M497 613.500h79M543.500 486v46M574.500 486v46M606 499v32M509 652h34v7M510 499.500h96" fill="none" stroke="#343537" stroke-width="1" stroke-opacity=".8" /><rect x="606" y="497" width="7" height="35" fill="#505153" />
        <path d="M522.500 496l2.500 7-4 9q-8 3-13-2 1-9 14.500-14zM592 496q12 3 16 9l-5 7q-6 2-12-2zM507 635q13 3 16 11-1 6-7 7-5-1-9-18z" fill="#68696b" stroke="#424345" stroke-width=".8" />
        <rect x="552" y="501" width="20" height="17" rx="1" fill="#17191a" /><path d="M553 502.700h18" stroke="#18a8e0" stroke-width="3.200" /><path d="M563 502.700h7" stroke="#e5f6fc" stroke-width="1.500" /><path d="M558 515.500h6" stroke="#777" stroke-width="2" /><path d="M554 509.500h16" stroke="#333" />
        <rect x="527" y="617" width="19" height="17" fill="#141617" /><path d="M530 622.500h14M530 626h12" stroke="#36393b" /><path d="M527 632.300h19" stroke="#18a8e0" stroke-width="3.300" /><path d="M528 632.300h8" stroke="#e5f6fc" stroke-width="1.500" />

        <rect x="581" y="534" width="81" height="119" fill="#121313" /><path d={rugDark} stroke="#060606" /><path d={rugSpecks} stroke="#232424" stroke-width=".8" />
        <rect x="683" y="528" width="17" height="101" fill="#232425" filter="url(#sh)" /><path d="M683 546.500h17M684 549h16" stroke="#0a0a0a" stroke-width="1.200" /><path d="M692 538l3 3M695 536v6M697 539l-3 3" stroke="#8b7776" stroke-width=".8" />

        <!-- dumbbells and bench -->
        <g fill="#2c2e30"><rect x="715" y="633" width="7" height="5" rx="2.300" /><rect x="724" y="633" width="7" height="5" rx="2.300" /><rect x="715" y="645" width="7" height="5" rx="2.300" /><rect x="724" y="645" width="7" height="5" rx="2.300" /></g>
        <rect x="732" y="650" width="39" height="9.500" fill="#8d8d8b" /><path d="M733 651v8M769 651v8" stroke="#ddd" stroke-width="2.500" stroke-dasharray="1.500 1" /><rect x="736" y="650.500" width="30" height="7.500" fill="#c9c9c9" stroke="#eee" stroke-width=".7" />

        <!-- bathroom -->
        <path d="M888.500 493.500h13M888.500 491.500v4M901.500 491.500v4" stroke="#999" stroke-width="1" fill="none" />
        <rect x="869" y="509" width="61" height="25.500" fill="#dadada" filter="url(#sh)" /><path d="M869 510h61" stroke="#888" stroke-width="1.500" /><path d="M877 517h45l-2 14H879z" fill="#c8c9ca" /><path d="M880 520.500l3 6.500h33l3-6.500 2 10.500H878z" fill="#b4b5b6" /><circle cx="900" cy="514.500" r="1.500" fill="#fff" /><circle cx="900" cy="519" r="1" fill="#fff" /><path d="M871 515l4-3M922 512h6" stroke="#331f1f" stroke-width="1.700" /><path d="M866.500 512v12M933.500 512v12" stroke="#333" /><circle cx="866.500" cy="523.500" r="1.700" fill="#2b2222" /><circle cx="933.500" cy="523.500" r="1.700" fill="#2b2222" />
        <circle cx="904" cy="591.800" r="38" fill="#283f4b" /><path d={roundDark} stroke="#20353f" /><path d={roundLight} stroke="#324956" stroke-width=".9" />
        <path d="M974 554h7v6h-5zM987 554h8v6h-8z" fill="#ececec" /><path d="M999 566.500h-15q-15 1-15 9.500t15 9.500h15z" fill="#dedede" filter="url(#sh)" /><path d="M994.500 566v20" stroke="#777" /><path d="M995 567h4v18h-4z" fill="#d6d6d6" />
        <circle cx="991.500" cy="598.500" r="7.300" fill="#3c3e3f" /><circle cx="991.500" cy="598.500" r="4.700" fill="#626364" stroke="#262728" />
        <rect x="959" y="619" width="40" height="41" fill="#e6e6e6" /><rect x="962.500" y="622.500" width="33" height="34" rx="3" fill="#dfdfdf" stroke="#c0c0c0" /><circle cx="991.500" cy="634" r="2.500" fill="none" stroke="#b58e8a" stroke-width="1.300" /><path d="M991 634h16M1001 634l5 11M1003 649h4" stroke="#c9b4b1" stroke-width="1.300" /><circle cx="991.500" cy="652.500" r="1.400" fill="none" stroke="#999" />

        <!-- dimensions -->
        <g stroke="#555" stroke-width="1"><path d="M426.500 168V657M1067.500 187V657" /><path d="M1093.200 187V663" stroke="#777" /></g>
        <path d="M426.500 164l-2 6h4zM426.500 660.500l-2-6h4zM1067.500 660.500l-2-6h4zM1093.200 667.500l-2-6h4z" />
        <g fill="#f8f8f7"><rect x="420" y="395" width="13" height="35" /><rect x="1061" y="395" width="13" height="35" /><rect x="1087" y="391" width="12" height="41" /></g>
        <g class="dim"><text transform="translate(430.500 412) rotate(-90)">9.77 m</text><text transform="translate(1071.500 412) rotate(-90)">9.77 m</text><text transform="translate(1097.300 412) rotate(-90)">10.07 m</text><text x="650" y="732">6.12 m</text><text x="906" y="732">3.70 m</text></g>
        <path d="M494 728l6-2v4zM806 728l-6-2v4zM812 728l6-2v4zM999 728l-6-2v4z" />
        <rect x="361" y="131" width="1005" height="9" fill="url(#topshade)" />
      </svg>

      <div class="zooms">
        <div><svg width="16" height="16" viewBox="0 0 16 16"><path d="M8 .5v15M.5 8h15" stroke="#8a8a8a" stroke-width="1.500" /></svg></div>
        <div><svg width="16" height="16" viewBox="0 0 16 16"><path d="M.5 8h15" stroke="#8a8a8a" stroke-width="1.500" /></svg></div>
        <div><svg width="16" height="16" viewBox="0 0 16 16"><circle cx="8" cy="8" r="5.700" fill="none" stroke="#757575" stroke-width="1.500" /><circle cx="8" cy="8" r="2.300" fill="#757575" /><path d="M8 0v3M8 13v3M0 8h3M13 8h3" stroke="#757575" stroke-width="1.500" /></svg></div>
      </div>
      <div class="fold"><svg width="10" height="16" viewBox="0 0 10 16"><path d="M8.500 1.500L2 8l6.500 6.500" fill="none" stroke="#fff" stroke-width="2.500" /></svg></div>

      <div class="views">
        <div class="styles">
          <div>{@render plan('#fff')}</div>
          <div>{@render plan('#b9d1ec')}</div>
          <div class="sel">{@render plan('#d2a679')}</div>
        </div>
        <div class="cfg"><svg width="23" height="21" viewBox="0 0 23 21"><rect x="1" y="1.500" width="21" height="15" rx="1.500" fill="#fff" stroke="#666" stroke-width="1.800" /><path d="M4 19.300h15" stroke="#777" stroke-width="2" /><circle cx="11.500" cy="9" r="2.900" fill="none" stroke="#666" stroke-width="2" /><path d="M11.500 3.500v2M11.500 12.500v2M6.700 6.200l1.800 1M14.500 10.800l1.800 1M6.700 11.800l1.800-1M14.500 7.200l1.800-1" stroke="#666" stroke-width="2" /></svg></div>
        <div class="dims"><span class="act">2D</span><span>3D</span></div>
      </div>

      <div class="bottom">
        <div class="units"><span class="act">m</span><span>ft</span></div>
        <div class="sq"><svg width="21" height="17" viewBox="0 0 21 17"><path d="M12.500 13.800H20v1.700" fill="none" stroke="#7b7b7b" stroke-width="1.500" /><circle cx="8" cy="8" r="5.800" fill="none" stroke="#7b7b7b" stroke-width="3.200" /><path d="M8 12.200h6v3H8z" fill="#7b7b7b" /></svg></div>
        <div class="sq s1">{@render hammer()}</div>
        <div class="sq s2">{@render note()}</div>
        <div class="sq s3">{@render chair()}</div>
      </div>
    </section>
  </main>

  <footer>
    <div class="start"><svg width="16" height="16" viewBox="0 0 16 16"><path d="M0 2.300l6.700-1v6.300H0zM7.500 1.200L16 0v7.600H7.500zM0 8.400h6.700v6.300L0 13.700zM7.500 8.400H16V16l-8.500-1.200z" fill="#fff" /></svg></div>
    <div class="find">
      <svg width="17" height="17" viewBox="0 0 17 17"><circle cx="10.500" cy="6.300" r="5.200" fill="none" stroke="#111" stroke-width="1.300" /><path d="M6.600 10L.7 16" stroke="#111" stroke-width="1.300" /></svg>
      Digite aqui para pesquisar
    </div>
    <div class="apps">
      {#each apps as a}
        <div class="app" class:run={running.includes(a)} class:cur={a === 'chrome'}>{@render appIcon(a)}</div>
      {/each}
    </div>
    <div class="tray">
      <span style="width:36px"><svg width="24" height="16" viewBox="0 0 24 16"><path d="M1 1h19v13.500H2.500L1 13zM20 3.500h2.500v9.500l-1.500 1.500H5" fill="none" stroke="#fff" stroke-width="1.500" /><path d="M4 4.500h13M11.500 7.500H17M11.500 10.500H17" stroke="#fff" stroke-width="1.500" /><path d="M4.700 7.700h4v3.500h-4z" fill="none" stroke="#fff" stroke-width="1.300" /></svg></span>
      <span style="width:36px"><svg width="12" height="8" viewBox="0 0 12 8"><path d="M1 7l5-5 5 5" fill="none" stroke="#fff" stroke-width="1.300" /></svg></span>
      <span style="width:14px"><svg width="12" height="16" viewBox="0 0 12 16"><path d="M2 2.200Q6-.5 10 2.200M2 13.800q4 2.700 8 0" fill="none" stroke="#fff" stroke-width="1.200" /><rect x="1" y="4.500" width="7" height="7" rx="1.500" fill="none" stroke="#fff" stroke-width="1.200" /><path d="M8 7l3-1.500v5L8 9" fill="none" stroke="#fff" /></svg></span>
      <span style="width:31px"><svg width="12" height="16" viewBox="0 0 12 16"><rect x="3" y="0" width="6" height="11" rx="2" fill="#fff" /><path d="M1 7v2.500q0 3 5 3t5-3V7M6 12v3M3 15.400h6" fill="none" stroke="#fff" stroke-width="1.200" /></svg></span>
      <span style="width:20px"><svg width="17" height="13" viewBox="0 0 17 13"><path d="M6 3.500h9v8H5V8.500M15 6h1.500v3H15" fill="none" stroke="#fff" stroke-width="1.200" /><path d="M8 5.500h5.500v4H7z" fill="#fff" /><path d="M1 1.500h5V4q0 2.500-2.500 2.500T1 4zM2.300 0v2M4.700 0v2M3.500 6.500V9" fill="none" stroke="#fff" stroke-width="1.100" /></svg></span>
      <span style="width:28px"><svg width="14" height="13" viewBox="0 0 14 13"><path d="M1 12Q1.500 2 13 1M4 12.500Q5 5 13 4.500M7 12.500q.5-4 6-4.700M10 12.500q0-1.500 3-2" fill="none" stroke="#ddd" stroke-width="1.200" /></svg></span>
      <span style="width:20px"><svg width="17" height="14" viewBox="0 0 17 14"><path d="M1 5h2.500L7 2v10L3.500 9H1z" fill="none" stroke="#fff" stroke-width="1.100" /><path d="M9.500 5q1.300 2 0 4M11.500 3q2.700 4 0 8M13.700 1q4 6 0 12" fill="none" stroke="#fff" stroke-width="1.100" /></svg></span>
      <span style="width:38px" class="two">POR<br />PTB2</span>
      <span style="width:68px" class="two">16:54<br />21/01/2022</span>
      <span style="width:43px"><svg width="17" height="17" viewBox="0 0 17 17"><path d="M.7.7h15.600v11.800h-5L8.500 15.500l-2.800-3h-5z" fill="none" stroke="#fff" stroke-width="1.200" /></svg></span>
      <i></i>
    </div>
  </footer>
</div>

<style>
  :global(body) { margin: 0; overflow: hidden; }
  .screen { width: 1366px; height: 768px; display: flex; flex-direction: column; overflow: hidden; font-family: Lato, sans-serif; background: #fff; }
  .screen * { box-sizing: border-box; }
  svg { display: block; flex: none; }

  .tabs { height: 34px; flex: none; display: flex; align-items: center; background: #dee1e6; font-family: "Open Sans", sans-serif; font-size: 12px; color: #3c4043; }
  .tab { height: 34px; flex: none; display: flex; align-items: center; padding: 0 11px 0 20px; position: relative; }
  .tab + .tab { padding-left: 11px; }
  .tab.active { background: #fff; border-radius: 8px 8px 0 0; }
  .tab.sep::after { content: ''; position: absolute; right: -1px; top: 7px; height: 20px; width: 1px; background: #85888c; }
  .fav { width: 17px; flex: none; margin-right: 7px; }
  .tab + .tab .fav { margin-right: 8px; }
  .title { flex: 1; white-space: nowrap; overflow: hidden; letter-spacing: -.27px; -webkit-mask-image: linear-gradient(90deg, #000 calc(100% - 18px), transparent); mask-image: linear-gradient(90deg, #000 calc(100% - 18px), transparent); }
  .x { margin-left: 9px; }
  .newtab { margin-left: 17px; }
  .wins { margin-left: 74px; display: flex; gap: 34px; margin-top: -6px; }

  .toolbar { height: 37px; flex: none; display: flex; align-items: center; background: #fff; border-bottom: 1px solid #dadce0; padding-left: 14px; font-family: "Open Sans", sans-serif; }
  .nav { margin-right: 16px; }
  .omni { width: 1150px; height: 28px; margin-left: -2px; border-radius: 14px; background: #f1f3f4; display: flex; align-items: center; padding: 0 10px 0 13px; }
  .url { font-size: 13.500px; letter-spacing: -.13px; color: #5f6368; margin-left: 11px; flex: 1; }
  .url b { font-weight: 400; color: #202124; }
  .share { margin-right: 16px; }
  .puz { margin-left: 13px; }
  .ava { margin: 0 20px 0 13px; }

  header { height: 60px; flex: none; display: flex; align-items: center; background: #fff; }
  .brand { margin-left: 17px; }
  .select { width: 276px; height: 36px; margin-left: 23px; border: 1px solid #d2d2d2; border-radius: 5px; display: flex; align-items: center; justify-content: space-between; padding: 0 12px; font-weight: 700; font-size: 16px; color: #444; }
  .tools { display: flex; margin-left: 34px; }
  .undo { margin: 0 31px 0 35px; }
  .redo { margin-right: 30px; }
  h1 { margin: -1px 0 0 248px; width: 166px; font-size: 19.500px; font-weight: 700; color: #757575; white-space: nowrap; }
  .export { margin-left: auto; margin-right: 16px; width: 144px; height: 38px; border: 0; border-radius: 3px; background: #47a5eb; color: #fff; font: 900 14.500px Lato, sans-serif; letter-spacing: -.2px; display: flex; align-items: center; justify-content: space-between; padding: 0 7px 1px 14px; white-space: nowrap; }

  main { height: 597px; flex: none; display: flex; }
  nav { width: 60px; display: flex; flex-direction: column; padding-top: 12px; background: linear-gradient(190deg, #47a5eb, #49aef2 45%, #4ac4fb); color: #b8def9; }
  nav div { height: 48px; display: flex; align-items: center; justify-content: center; }
  nav .on { background: #fff; color: #47a5eb; }
  nav .help { margin-top: 193px; }
  aside { width: 301px; background: linear-gradient(#f4f4f4, #fff 8px); padding-left: 16px; }
  h2 { margin: 24px 0 0; font-size: 15px; line-height: 20px; color: #111; font-weight: 700; letter-spacing: -.35px; }
  .search { margin-top: 20px; width: 268px; height: 36px; border-radius: 4px; background: #f3f3f3; display: flex; align-items: center; justify-content: space-between; padding: 0 6px 2px 9px; font-size: 15px; font-weight: 700; letter-spacing: -.25px; color: #b0b0b0; }
  .scroller { margin-top: 8px; height: 489px; display: flex; overflow: hidden; }
  .list { width: 267px; height: 489px; margin-top: -18px; font-size: 15px; font-weight: 700; letter-spacing: -.25px; word-spacing: -1px; color: #444; }
  .item { height: 24.450px; line-height: 24.450px; padding-left: 24px; }
  .group { height: 23.600px; line-height: 24.400px; color: #c9c9c9; letter-spacing: -.6px; }
  .bar { width: 17px; background: #f0f0f0; display: flex; flex-direction: column; align-items: center; padding: 7px 0; }
  .thumb { width: 13px; height: 399px; background: #c1c1c1; margin: 62px 0 6px; }

  section { flex: 1; position: relative; }
  .canvas { position: absolute; inset: 0; }
  .dim { font: 11px "Liberation Sans", sans-serif; text-anchor: middle; fill: #000; }
  .zooms { position: absolute; left: 11px; top: 18px; display: flex; flex-direction: column; gap: 12px; }
  .zooms div { width: 36px; height: 36px; border-radius: 5px; background: #fff; display: grid; place-items: center; box-shadow: 0 0 4px rgba(0,0,0,.16); }
  .fold { position: absolute; left: 0; top: 240px; width: 31px; height: 59px; background: #47a5eb; display: grid; place-items: center; }
  .fold svg { margin: -3px 2px 0 0; }
  .views { position: absolute; top: 16px; right: 16px; display: flex; gap: 16px; }
  .views > div { background: #fff; height: 40px; box-shadow: 0 0 5px rgba(0,0,0,.15); display: flex; }
  .styles div { width: 45px; display: grid; place-items: center; }
  .styles .sel { border: 2px solid #47a5eb; }
  .cfg { width: 40px; align-items: center; justify-content: center; }
  .dims span { width: 52px; text-align: center; line-height: 40px; font-weight: 900; font-size: 14.500px; letter-spacing: -.3px; color: #5aaeed; }
  span.act { background: #47a5eb; color: #fff !important; }
  .bottom { position: absolute; left: 9px; top: 549px; display: flex; gap: 8px; }
  .bottom > div { height: 32px; background: #fff; box-shadow: 0 0 5px rgba(0,0,0,.18); color: #7b7b7b; display: flex; }
  .units span { width: 32px; text-align: center; font: 15px/31px Lato, sans-serif; color: #777; }
  .units .act { font-weight: 700; }
  .sq { width: 32px; align-items: center; justify-content: center; }
  .s1 :global(svg) { width: 22px; height: 22px; }
  .s2 :global(svg) { width: 17px; height: 17px; }
  .s3 :global(svg) { width: 20px; height: 20px; }

  footer { height: 40px; flex: none; display: flex; background: linear-gradient(90deg, #24333a, #27363c 60%, #292c2d 72%, #25292b 76%, #1d2a31 90%, #1c2a31); color: #fff; font-family: "Open Sans", sans-serif; }
  .start { width: 48px; display: grid; place-items: center; }
  .find { width: 344px; background: #f1f1f1; border: 1px solid #bdbdbd; display: flex; align-items: center; gap: 11px; padding-left: 11px; font-size: 15px; letter-spacing: -.3px; color: #333; white-space: nowrap; }
  .apps { display: flex; margin-left: 1.500px; }
  .app { width: 44px; height: 40px; display: grid; place-items: center; position: relative; }
  .app.run::after, .app.cur::after { content: ''; position: absolute; bottom: 0; left: 5px; width: 35px; height: 2px; background: #76b9ed; }
  .app.cur { background: #4e5c63; }
  .app.cur::after { left: 0; width: 44px; }
  .tray { margin-left: auto; display: flex; align-items: center; }
  .tray span { display: grid; place-items: center; height: 40px; flex: none; }
  .tray .two { display: block; font-size: 12px; line-height: 18px; letter-spacing: -.45px; text-align: center; white-space: nowrap; padding-top: 2px; }
  .tray i { width: 11px; height: 40px; background: linear-gradient(90deg, transparent 6px, #65706f 6px, #65706f 7px, transparent 7px); }
</style>
